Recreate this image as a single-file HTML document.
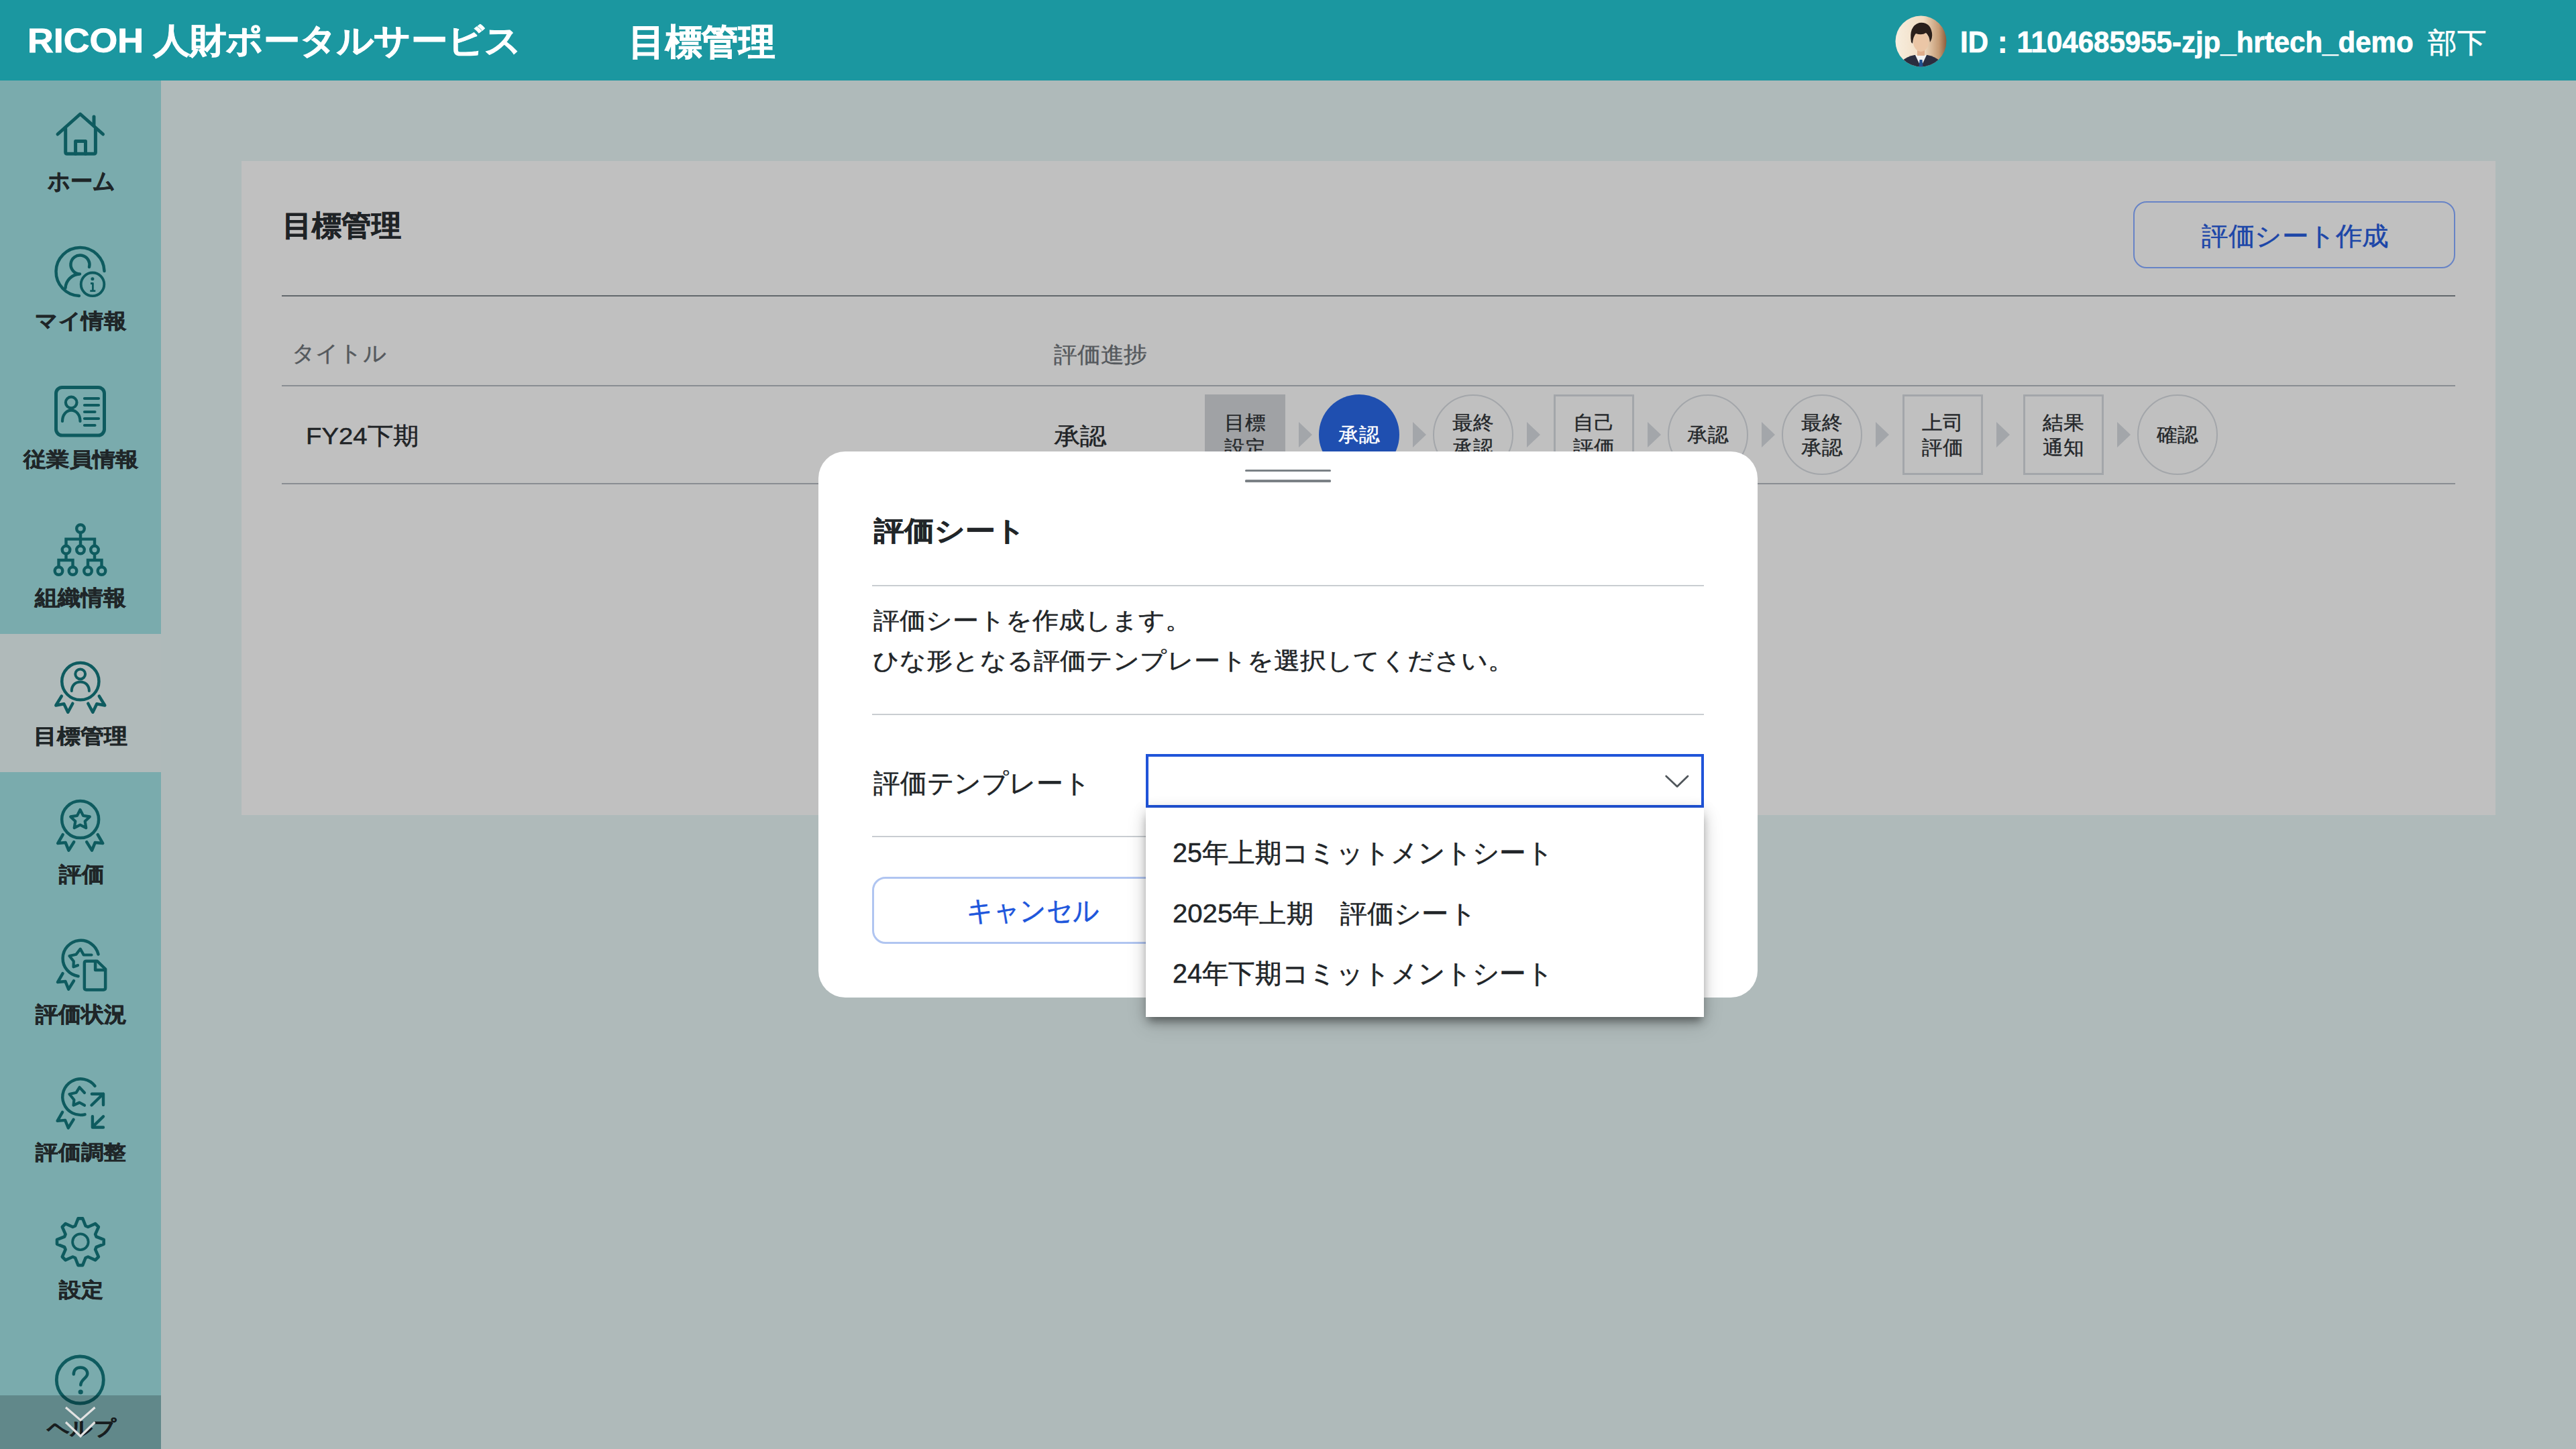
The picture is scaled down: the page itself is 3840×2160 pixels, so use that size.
<!DOCTYPE html>
<html lang="ja">
<head>
<meta charset="utf-8">
<title>目標管理</title>
<style>
html,body{margin:0;padding:0}
body{width:3840px;height:2160px;overflow:hidden;position:relative;background:#afbaba;font-family:"Liberation Sans",sans-serif}
.a{position:absolute}
.t{position:absolute;white-space:nowrap;line-height:1;transform-origin:0 0}
.st{position:absolute;width:120px;height:120px;box-sizing:border-box;top:588px}
.lb{position:absolute;width:160px;text-align:center;white-space:nowrap;font-size:28.5px;line-height:37px;color:#25282b;-webkit-text-stroke:0.4px currentColor}
</style>
</head>
<body>

<div class="a" style="left:0;top:0;width:3840px;height:120px;background:#1b97a0"></div>
<div class="t" style="left:40.5px;top:35.5px;font-size:50.5px;font-weight:700;color:#ffffff;transform:scaleX(1.0633);-webkit-text-stroke:0.86px #ffffff;">RICOH 人財ポータルサービス</div>
<div class="t" style="left:936.6px;top:34.9px;font-size:53.98px;font-weight:700;color:#ffffff;transform:scaleX(1.0128);-webkit-text-stroke:0.92px #ffffff;">目標管理</div>
<div class="t" style="left:2921.9px;top:42.3px;font-size:43.62px;font-weight:700;color:#ffffff;transform:scaleX(0.9639);-webkit-text-stroke:0.74px #ffffff;">ID：1104685955-zjp_hrtech_demo</div>
<div class="t" style="left:3618.6px;top:42.8px;font-size:42.04px;font-weight:400;color:#ffffff;transform:scaleX(1.0369);-webkit-text-stroke:0.55px #ffffff;">部下</div>
<svg class="a" style="left:2825px;top:23px" width="77" height="77" viewBox="0 0 77 77">
<defs><clipPath id="av"><circle cx="38.5" cy="38.5" r="38"/></clipPath>
<linearGradient id="avbg" x1="0" y1="0" x2="1" y2="0"><stop offset="0" stop-color="#f7eedf"/><stop offset="0.55" stop-color="#f1dcc2"/><stop offset="0.85" stop-color="#c59a74"/><stop offset="1" stop-color="#8a5a3a"/></linearGradient></defs>
<g clip-path="url(#av)">
<rect width="77" height="77" fill="url(#avbg)"/>
<path d="M6 77 L10 68 Q18 61 29 59 L48 59 Q59 61 67 68 L71 77 Z" fill="#2a2d3f"/>
<path d="M30 59 L38.5 77 L47 59 Z" fill="#f2f2f2"/>
<path d="M36.5 66 L40.5 66 L41.5 77 L35.5 77 Z" fill="#1f4f90"/>
<rect x="33" y="50" width="11" height="10" fill="#e0ae8c"/>
<ellipse cx="38.5" cy="39" rx="11.5" ry="15" fill="#ebc6a6"/>
<path d="M24 40 Q20 16 36 11 Q52 9 55 26 Q56 34 52 40 Q51 30 46 26 Q40 30 31 27 Q27 31 26 42 Z" fill="#2a1f1b"/>
</g></svg>
<div class="a" style="left:0;top:120px;width:240px;height:2040px;background:#7aabad"></div>
<div class="a" style="left:0;top:945px;width:240px;height:206px;background:#b0baba"></div>
<svg class="a" style="left:0;top:0" width="240" height="2160" viewBox="0 0 240 2160">
<g fill="none" stroke="#0e5b5f" stroke-width="5" stroke-linecap="round" stroke-linejoin="round">
<path d="M86 200 L119.6 170 L153.5 200"/>
<path d="M140 174 L140 187"/>
<path d="M97.7 192 L97.7 227 Q97.7 229.3 100 229.3 L140 229.3 Q142.4 229.3 142.4 227 L142.4 192"/>
<path d="M112.6 229.3 L112.6 210.5 L127.5 210.5 L127.5 229.3"/>
<g stroke-width="4.5">
<path d="M155.5 404 A36 36 0 1 0 118 441"/>
<path d="M133 398 A14 14 0 1 0 119 408.5 A22 22 0 0 0 97.5 429"/>
<circle cx="138" cy="423.8" r="17.3" stroke-width="3.9"/>
</g>
<circle cx="137.9" cy="415.8" r="2.5" fill="#0e5b5f" stroke="none"/>
<path d="M135 422.5 L138.4 422.5 L138.4 433.5 M134.3 433.6 L142.3 433.6" stroke-width="2.8" stroke-linecap="butt"/>
<rect x="83.5" y="577.5" width="72" height="71.5" rx="9" stroke-width="5"/>
<g stroke-width="4.2">
<circle cx="106.2" cy="600" r="8.3"/>
<path d="M93 628 C93 618 99 611.6 106.25 611.6 C113.5 611.6 119.5 618 119.5 628"/>
<path d="M126 594 H147 M126 604 H147 M126 614 H141.5 M126 624 H147 M126 634 H141.5"/>
</g>
<g stroke-width="4.4">
<circle cx="120" cy="788" r="5.8"/>
<circle cx="98.5" cy="819.6" r="5.8"/>
<circle cx="120" cy="819.6" r="5.8"/>
<circle cx="141" cy="819.6" r="5.8"/>
<circle cx="87.5" cy="851" r="5.8"/>
<circle cx="108.5" cy="851" r="5.8"/>
<circle cx="131" cy="851" r="5.8"/>
<circle cx="151.5" cy="851" r="5.8"/>
<path d="M120 794 V813.8 M98.5 813.8 V803.6 H141 V813.8" stroke-linecap="butt" stroke-linejoin="miter"/>
<path d="M98.5 825.4 V835 M87.5 845.2 V835 H108.5 V845.2 M141 825.4 V835 M131 845.2 V835 H151.5 V845.2" stroke-linecap="butt" stroke-linejoin="miter"/>
</g>
<g stroke-width="4.5">
<circle cx="119.85" cy="1015.7" r="27.6"/>
<circle cx="119.7" cy="1004.8" r="7.4" stroke-width="4"/>
<path d="M106.8 1030 C106.8 1022 112 1016.5 119.85 1016.5 C127.7 1016.5 132.9 1022 132.9 1030" stroke-width="4"/>
<path d="M91.8 1037.7 L83.3 1051.5 L95.3 1049.2 L101.3 1061.7 L108.3 1048.7 M147.8 1037.7 L156.3 1051.5 L144.3 1049.2 L138.3 1061.7 L131.3 1048.7"/>
</g>
<g stroke-width="4.5">
<circle cx="119.65" cy="1221.6" r="27.5"/>
<path d="M119.5 1207.0 L124.0 1215.9 L133.8 1217.4 L126.7 1224.3 L128.3 1234.1 L119.5 1229.6 L110.7 1234.1 L112.3 1224.3 L105.2 1217.4 L115.0 1215.9 Z" stroke-width="4.2"/>
<path d="M93.7 1244.1 L86.2 1257.1 L97.7 1256.1 L102.4 1267.6 L110.2 1255.1 M145.7 1244.1 L153.2 1257.1 L141.7 1256.1 L137.0 1267.6 L129.2 1255.1"/>
</g>
<g stroke-width="4.5">
<path d="M146.5 1422.5 A26.8 26.8 0 1 0 116.6 1455.2"/>
<path d="M136.5 1423.5 L124.7 1423.5 L119.75 1414.6 L113.5 1422.8 L103.5 1425 L109.8 1433 L109.5 1441.3 L116 1439" stroke-width="4.2"/>
<path d="M93.5 1451.1 L86.0 1464.1 L97.5 1463.1 L102.2 1474.6 L110.0 1462.1"/>
<path d="M125.85 1435.5 Q125.85 1432.75 128.6 1432.75 L145 1432.75 L157.15 1444.5 L157.15 1472.5 Q157.15 1475.4 154.3 1475.4 L128.6 1475.4 Q125.85 1475.4 125.85 1472.5 Z"/>
<path d="M142.1 1433 V1446 H157"/>
</g>
<g stroke-width="4.4">
<path d="M141.5 1618.8 A26.9 26.9 0 1 0 126.6 1661.3"/>
<path d="M126 1629 L118.5 1620.8 L113.5 1628.8 L103.5 1631 L110.4 1639.5 L109.5 1647.7 L118.5 1643.5 L126 1647.7" stroke-width="4.2"/>
<path d="M93.1 1657.9 L85.6 1670.9 L97.1 1669.9 L101.8 1681.4 L109.6 1668.9"/>
<path d="M136.5 1647.5 L154 1630.5 M136.9 1630.8 H154 V1647"/>
<path d="M154 1664.3 L137.8 1680 M137.9 1664.3 V1680.5 H154"/>
</g>
<g stroke-width="4.5">
<path d="M112.1 1827.5 L116.5 1816.4 L123.2 1816.4 L127.6 1827.5 L131.2 1829.0 L142.1 1824.2 L146.9 1829.0 L142.1 1839.9 L143.6 1843.5 L154.7 1847.9 L154.7 1854.6 L143.6 1859.0 L142.1 1862.6 L146.9 1873.5 L142.1 1878.3 L131.2 1873.5 L127.6 1875.0 L123.2 1886.1 L116.5 1886.1 L112.1 1875.0 L108.5 1873.5 L97.6 1878.3 L92.8 1873.5 L97.6 1862.6 L96.1 1859.0 L85.0 1854.6 L85.0 1847.9 L96.1 1843.5 L97.6 1839.9 L92.8 1829.0 L97.6 1824.2 L108.5 1829.0 Z" stroke-width="4.6"/>
<circle cx="119.9" cy="1851.25" r="11.8" stroke-width="3.8"/>
</g>
<circle cx="119.3" cy="2057" r="35" stroke-width="4.8"/>
<path d="M109.8 2048.5 C109.8 2042 114 2038.5 120 2038.5 C126 2038.5 130.3 2042.5 130.3 2047.5 C130.3 2054.5 120.5 2056 120.3 2064.5" stroke-width="4.5"/>
<circle cx="120.2" cy="2075" r="3.6" fill="#0e5b5f" stroke="none"/>
</g>
</svg>
<div class="t" style="left:70.7px;top:253.4px;font-size:34.52px;font-weight:700;color:#1f2628;transform:scaleX(0.9501);-webkit-text-stroke:0.59px #1f2628;">ホーム</div>
<div class="t" style="left:51.5px;top:462.7px;font-size:31.31px;font-weight:700;color:#1f2628;transform:scaleX(1.0828);-webkit-text-stroke:0.53px #1f2628;">マイ情報</div>
<div class="t" style="left:34.6px;top:669.2px;font-size:30.39px;font-weight:700;color:#1f2628;transform:scaleX(1.1442);-webkit-text-stroke:0.52px #1f2628;">従業員情報</div>
<div class="t" style="left:51.6px;top:875.2px;font-size:32.32px;font-weight:700;color:#1f2628;transform:scaleX(1.0647);-webkit-text-stroke:0.55px #1f2628;">組織情報</div>
<div class="t" style="left:50.3px;top:1082.0px;font-size:31.12px;font-weight:700;color:#1f2628;transform:scaleX(1.1271);-webkit-text-stroke:0.53px #1f2628;">目標管理</div>
<div class="t" style="left:88.3px;top:1288.9px;font-size:30.9px;font-weight:700;color:#1f2628;transform:scaleX(1.0858);-webkit-text-stroke:0.53px #1f2628;">評価</div>
<div class="t" style="left:53.3px;top:1496.0px;font-size:32.0px;font-weight:700;color:#1f2628;transform:scaleX(1.0602);-webkit-text-stroke:0.54px #1f2628;">評価状況</div>
<div class="t" style="left:53.3px;top:1702.6px;font-size:30.2px;font-weight:700;color:#1f2628;transform:scaleX(1.1259);-webkit-text-stroke:0.51px #1f2628;">評価調整</div>
<div class="t" style="left:88.3px;top:1908.1px;font-size:30.1px;font-weight:700;color:#1f2628;transform:scaleX(1.1035);-webkit-text-stroke:0.51px #1f2628;">設定</div>
<div class="t" style="left:69.6px;top:2114.3px;font-size:30.0px;font-weight:700;color:#1f2628;transform:scaleX(1.1075);-webkit-text-stroke:0.51px #1f2628;">ヘルプ</div>
<div class="a" style="left:0;top:2080px;width:240px;height:80px;background:rgba(0,0,0,0.2)"></div>
<svg class="a" style="left:0;top:2080px" width="240" height="80" viewBox="0 2080 240 80"><g fill="none" stroke="#e2e2e2" stroke-width="3.2" stroke-linecap="butt"><path d="M98 2098 L120 2117 L141.5 2098"/><path d="M98 2120 L120 2141 L141.5 2120"/></g></svg>
<div class="a" style="left:360px;top:240px;width:3360px;height:975px;background:#c0c0c0"></div>
<div class="t" style="left:421.0px;top:314.6px;font-size:42.86px;font-weight:700;color:#1f2326;transform:scaleX(1.0277);-webkit-text-stroke:0.73px #1f2326;">目標管理</div>
<div class="a" style="left:3180px;top:300px;width:480px;height:100px;box-sizing:border-box;border:2px solid #6783c6;border-radius:20px"></div>
<div class="t" style="left:3281.8px;top:333.7px;font-size:37.5px;font-weight:400;color:#1c46a8;transform:scaleX(1.0410);-webkit-text-stroke:0.49px #1c46a8;">評価シート作成</div>
<div class="a" style="left:420px;top:440px;width:3240px;height:2px;background:#62676c"></div>
<div class="t" style="left:435.0px;top:510.2px;font-size:33.33px;font-weight:400;color:#55595d;transform:scaleX(1.0355);-webkit-text-stroke:0.43px #55595d;">タイトル</div>
<div class="t" style="left:1570.7px;top:513.2px;font-size:32.89px;font-weight:400;color:#55595d;transform:scaleX(1.0547);-webkit-text-stroke:0.43px #55595d;">評価進捗</div>
<div class="a" style="left:420px;top:574px;width:3240px;height:2px;background:#898d92"></div>
<div class="t" style="left:456.1px;top:633.2px;font-size:35.89px;font-weight:400;color:#202326;transform:scaleX(1.0672);-webkit-text-stroke:0.47px #202326;">FY24下期</div>
<div class="t" style="left:1570.7px;top:632.9px;font-size:34.79px;font-weight:400;color:#202326;transform:scaleX(1.1266);-webkit-text-stroke:0.45px #202326;">承認</div>
<div class="a" style="left:420px;top:720px;width:3240px;height:2px;background:#898d92"></div>
<div class="st" style="left:1796px;background:#a0a2a5"></div>
<div class="lb" style="left:1776px;top:612.1px;color:#25282b;transform:scaleX(1.059)">目標<br>設定</div>
<div class="st" style="left:1966px;background:#1f4fb0;border-radius:50%"></div>
<div class="lb" style="left:1946px;top:629.6px;color:#ffffff;transform:scaleX(1.059)">承認</div>
<div class="st" style="left:2136px;border:2px solid #a3a6aa;border-radius:50%"></div>
<div class="lb" style="left:2116px;top:612.1px;color:#25282b;transform:scaleX(1.059)">最終<br>承認</div>
<div class="st" style="left:2316px;border:3px solid #a3a6aa"></div>
<div class="lb" style="left:2296px;top:612.1px;color:#25282b;transform:scaleX(1.059)">自己<br>評価</div>
<div class="st" style="left:2486px;border:2px solid #a3a6aa;border-radius:50%"></div>
<div class="lb" style="left:2466px;top:629.6px;color:#25282b;transform:scaleX(1.059)">承認</div>
<div class="st" style="left:2656px;border:2px solid #a3a6aa;border-radius:50%"></div>
<div class="lb" style="left:2636px;top:612.1px;color:#25282b;transform:scaleX(1.059)">最終<br>承認</div>
<div class="st" style="left:2836px;border:3px solid #a3a6aa"></div>
<div class="lb" style="left:2816px;top:612.1px;color:#25282b;transform:scaleX(1.059)">上司<br>評価</div>
<div class="st" style="left:3016px;border:3px solid #a3a6aa"></div>
<div class="lb" style="left:2996px;top:612.1px;color:#25282b;transform:scaleX(1.059)">結果<br>通知</div>
<div class="st" style="left:3186px;border:2px solid #a3a6aa;border-radius:50%"></div>
<div class="lb" style="left:3166px;top:629.6px;color:#25282b;transform:scaleX(1.059)">確認</div>
<svg class="a" style="left:1936px;top:629px" width="20" height="38" viewBox="0 0 20 38"><path d="M0 0 L20 19 L0 38 Z" fill="#a3a6aa"/></svg>
<svg class="a" style="left:2106px;top:629px" width="20" height="38" viewBox="0 0 20 38"><path d="M0 0 L20 19 L0 38 Z" fill="#a3a6aa"/></svg>
<svg class="a" style="left:2276px;top:629px" width="20" height="38" viewBox="0 0 20 38"><path d="M0 0 L20 19 L0 38 Z" fill="#a3a6aa"/></svg>
<svg class="a" style="left:2456px;top:629px" width="20" height="38" viewBox="0 0 20 38"><path d="M0 0 L20 19 L0 38 Z" fill="#a3a6aa"/></svg>
<svg class="a" style="left:2626px;top:629px" width="20" height="38" viewBox="0 0 20 38"><path d="M0 0 L20 19 L0 38 Z" fill="#a3a6aa"/></svg>
<svg class="a" style="left:2796px;top:629px" width="20" height="38" viewBox="0 0 20 38"><path d="M0 0 L20 19 L0 38 Z" fill="#a3a6aa"/></svg>
<svg class="a" style="left:2976px;top:629px" width="20" height="38" viewBox="0 0 20 38"><path d="M0 0 L20 19 L0 38 Z" fill="#a3a6aa"/></svg>
<svg class="a" style="left:3156px;top:629px" width="20" height="38" viewBox="0 0 20 38"><path d="M0 0 L20 19 L0 38 Z" fill="#a3a6aa"/></svg>
<div class="a" style="left:1220px;top:673px;width:1400px;height:814px;background:#ffffff;border-radius:40px"></div>
<div class="a" style="left:1856px;top:699.7px;width:128px;height:3.2px;border-radius:1.6px;background:#7b8186"></div>
<div class="a" style="left:1856px;top:715.4px;width:128px;height:3.2px;border-radius:1.6px;background:#7b8186"></div>
<div class="t" style="left:1303.4px;top:771.0px;font-size:40.0px;font-weight:700;color:#212528;transform:scaleX(1.1204);-webkit-text-stroke:0.68px #212528;">評価シート</div>
<div class="a" style="left:1300px;top:871.5px;width:1240px;height:2.5px;background:#c9cdd1"></div>
<div class="t" style="left:1301.7px;top:908.3px;font-size:34.65px;font-weight:400;color:#212528;transform:scaleX(1.1138);-webkit-text-stroke:0.45px #212528;">評価シートを作成します。</div>
<div class="t" style="left:1300.6px;top:967.1px;font-size:35.0px;font-weight:400;color:#212528;transform:scaleX(1.1158);-webkit-text-stroke:0.45px #212528;">ひな形となる評価テンプレートを選択してください。</div>
<div class="a" style="left:1300px;top:1063.5px;width:1240px;height:2.5px;background:#c9cdd1"></div>
<div class="t" style="left:1301.6px;top:1149.4px;font-size:38.66px;font-weight:400;color:#212528;transform:scaleX(1.0210);-webkit-text-stroke:0.5px #212528;">評価テンプレート</div>
<div class="a" style="left:1708px;top:1124px;width:832px;height:80px;box-sizing:border-box;border:4px solid #2054d9;background:#fff"></div>
<svg class="a" style="left:2480px;top:1150px" width="42" height="30" viewBox="0 0 42 30"><path d="M3.7 7 L20.1 22.5 L36 7" fill="none" stroke="#50565b" stroke-width="2.8" stroke-linecap="round" stroke-linejoin="round"/></svg>
<div class="a" style="left:1300px;top:1245.5px;width:1240px;height:2.5px;background:#c9cdd1"></div>
<div class="a" style="left:1300px;top:1307px;width:600px;height:100px;box-sizing:border-box;border:3px solid #b0c5f1;border-radius:20px"></div>
<div class="t" style="left:1441.2px;top:1337.0px;font-size:41.86px;font-weight:400;color:#1d56dc;transform:scaleX(0.9193);-webkit-text-stroke:0.54px #1d56dc;">キャンセル</div>
<div class="a" style="left:1708px;top:1204px;width:832px;height:312px;background:#fff;box-shadow:0 10px 12px -4px rgba(0,0,0,.38),0 12px 28px 0 rgba(0,0,0,.15),0 2px 18px 2px rgba(0,0,0,.1)"></div>
<div class="t" style="left:1748.0px;top:1252.2px;font-size:39.89px;font-weight:400;color:#212528;transform:scaleX(0.9898);-webkit-text-stroke:0.52px #212528;">25年上期コミットメントシート</div>
<div class="t" style="left:1748.1px;top:1343.7px;font-size:37.92px;font-weight:400;color:#212528;transform:scaleX(1.0574);-webkit-text-stroke:0.49px #212528;">2025年上期　評価シート</div>
<div class="t" style="left:1748.0px;top:1431.7px;font-size:39.89px;font-weight:400;color:#212528;transform:scaleX(0.9898);-webkit-text-stroke:0.52px #212528;">24年下期コミットメントシート</div>
</body>
</html>
